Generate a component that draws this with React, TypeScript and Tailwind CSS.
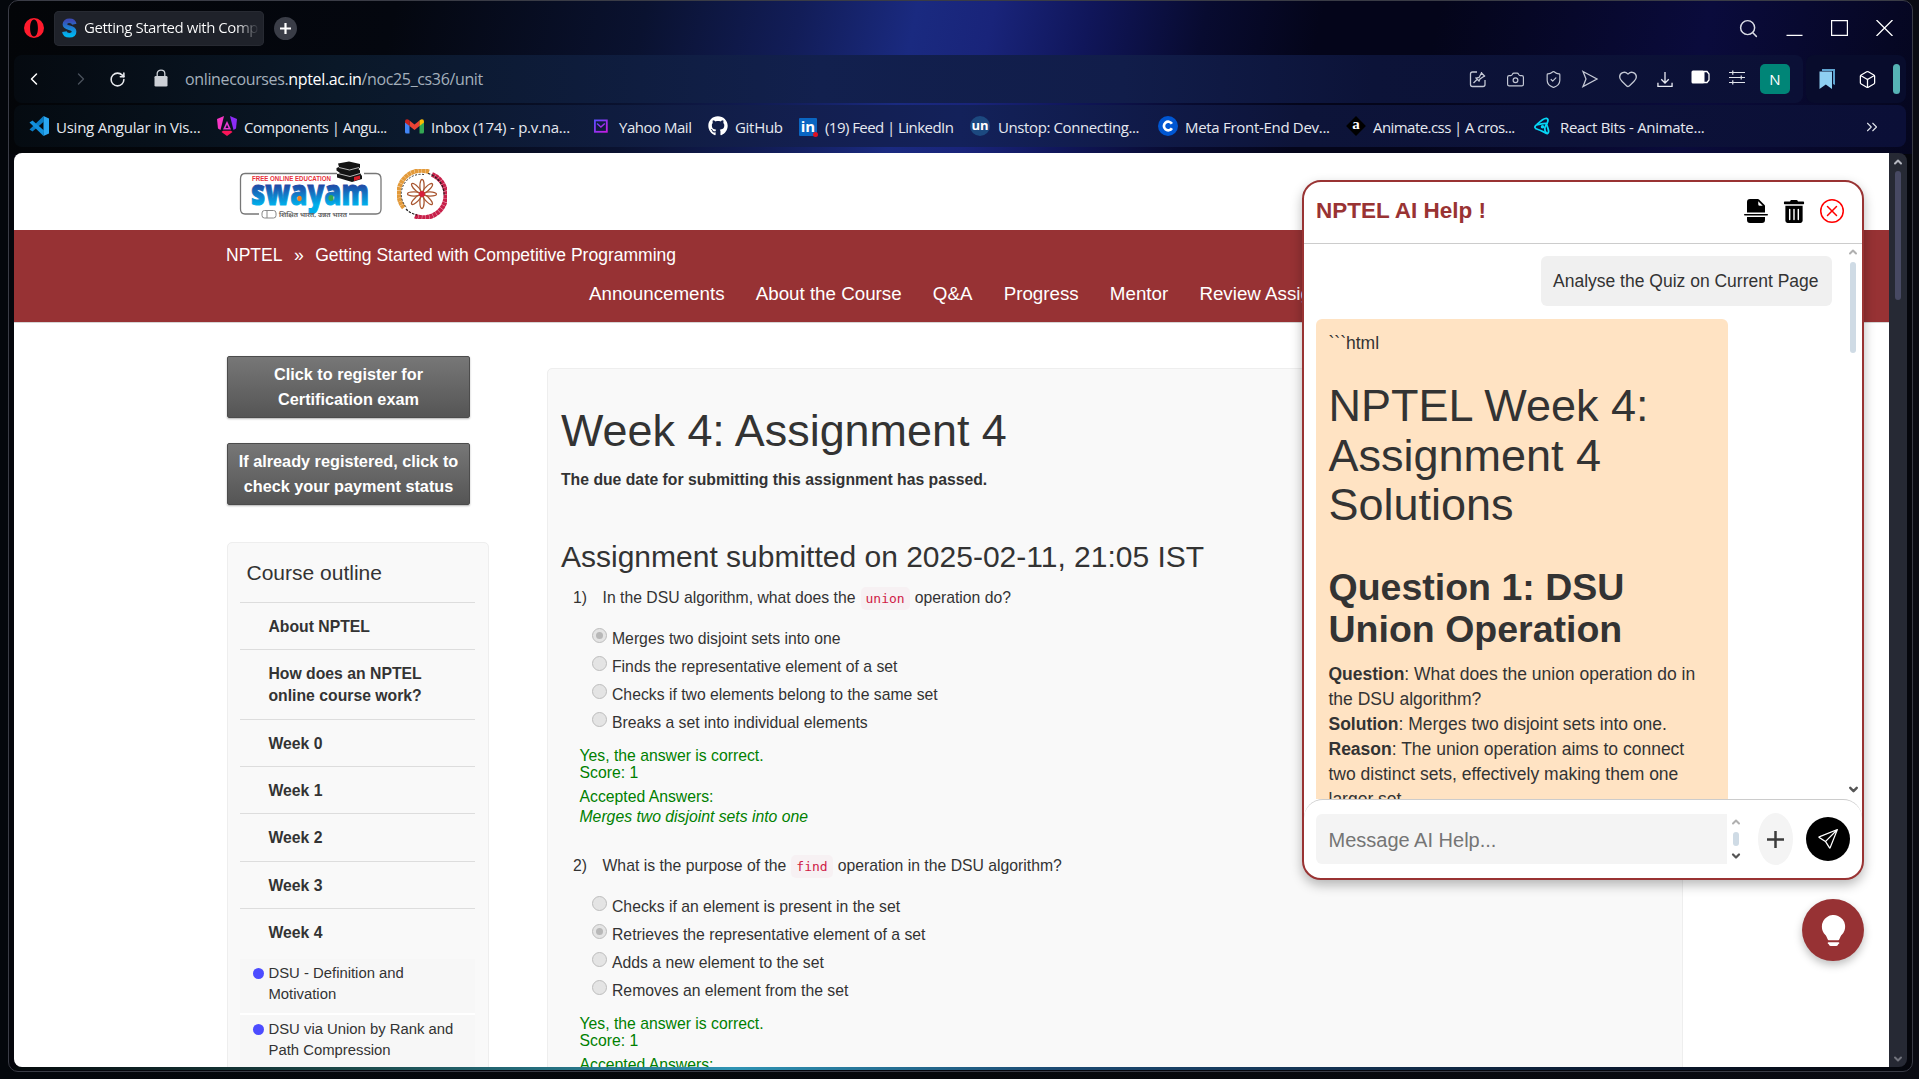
import React from "react";
import { BsFileEarmarkBreakFill, BsXCircle, BsSend, BsLightbulbFill } from "react-icons/bs";
import { FaGithub, FaTrashAlt } from "react-icons/fa";
import {
  Search, Camera, ShieldCheck, Heart, Box, ChevronsRight, ChevronLeft, ChevronRight, RotateCw,
  ChevronUp, ChevronDown,
} from "lucide-react";

const SwayamFavicon = () => (
  <svg className="h-5 w-[15px] shrink-0" viewBox="0 0 15 20" fill="none">
    <defs>
      <linearGradient id="fav" x1="0" y1="0" x2="0" y2="1">
        <stop offset="0" stopColor="#3b4bb5" />
        <stop offset="1" stopColor="#00b4ef" />
      </linearGradient>
    </defs>
    <path d="M12.300 6.200C11.700 3.600 9.800 2.800 7.500 2.800C4.600 2.800 2.900 4.200 2.900 6.200C2.900 11 12.100 8.500 12.100 13.500C12.100 16.200 10.200 17.200 7.400 17.200C4.500 17.200 2.800 16.200 2.400 13.600" stroke="url(#fav)" strokeWidth="4.600" />
  </svg>
);

const VsCode = () => (
  <svg className="size-5" viewBox="0 0 20 20">
    <path d="M14.500 0L20 2.500V17.500L14.500 20Z" fill="#2aa7f2" />
    <path d="M14.500 0L15 5.500L3.500 15.500L0.500 13.500Z" fill="#0a7cc4" />
    <path d="M0.500 6.500L3.500 4.500L15 14.500L14.500 20Z" fill="#1290dc" />
  </svg>
);
const Angular = () => (
  <svg className="size-5" viewBox="0 0 20 20">
    <path d="M0 3L7 0L3.500 14L1 12.500Z" fill="#f637c4" />
    <path d="M20 3L13 0L16.500 14L19 12.500Z" fill="#8b2cf5" />
    <path d="M10 5L14 13.500H6Z" fill="#e83ad0" />
    <path d="M10 8.500L11.500 12H8.500Z" fill="#0a1530" />
    <path d="M4.500 16L6 14.800H14L15.500 16L10 20Z" fill="#fb1458" />
  </svg>
);
const Gmail = () => (
  <svg className="h-5 w-[19px]" viewBox="0 0 19 20">
    <path d="M0 6L4.500 9V17.500H1.500Q0 17.500 0 16Z" fill="#4285f4" />
    <path d="M19 6L14.500 9V17.500H17.500Q19 17.500 19 16Z" fill="#34a853" />
    <path d="M4.500 4.500L9.500 8.500L14.500 4.500V10L9.500 14L4.500 10Z" fill="#ea4335" />
    <path d="M0 5.500Q0 3.200 2 3.200Q3 3.200 4.500 4.500V10L0 6.500Z" fill="#c5221f" />
    <path d="M19 5.500Q19 3.200 17 3.200Q16 3.200 14.500 4.500V10L19 6.500Z" fill="#fbbc04" />
  </svg>
);
const Yahoo = () => (
  <svg className="h-5 w-4" viewBox="0 0 16 20" fill="none">
    <defs>
      <linearGradient id="ya" x1="0" y1="0" x2="1" y2="1">
        <stop offset="0" stopColor="#5b4bff" />
        <stop offset="1" stopColor="#c81ce0" />
      </linearGradient>
    </defs>
    <rect x="0.900" y="4.400" width="11.900" height="11.400" stroke="url(#ya)" strokeWidth="1.800" />
    <path d="M3 7.500L6.900 11L10.800 7.500" stroke="url(#ya)" strokeWidth="1.500" />
  </svg>
);
const LinkedIn = () => (
  <div className="relative mt-px grid size-[18px] place-items-center rounded-[1px] bg-[#0a66c2] text-[15px] font-bold leading-none text-white">
    <span className="-mt-px">in</span>
    <i className="absolute -bottom-px -right-px size-[5px] rounded-full bg-[#e01020]" />
  </div>
);
const Unstop = () => (
  <div className="grid size-5 place-items-center rounded-full bg-[#1c4980] text-[13px] font-bold leading-none text-white">
    <span className="-mt-0.5">un</span>
  </div>
);
const Coursera = () => (
  <svg className="size-5" viewBox="0 0 20 20" fill="none">
    <circle cx="10" cy="10" r="10" fill="#0056d2" />
    <path d="M13.900 7.800A4.300 4.300 0 1 0 13.900 12.200" stroke="#fff" strokeWidth="2.700" />
  </svg>
);
const Animate = () => (
  <div className="relative grid size-5 place-items-center">
    <i className="absolute size-[14px] rotate-45 bg-black" />
    <span className="relative -mt-1 font-['Liberation_Serif',serif] text-[15px] font-bold leading-none text-white">a</span>
  </div>
);
const ReactBits = () => (
  <svg className="h-5 w-4" viewBox="0 0 16 20" fill="none" stroke="#06d6f5" strokeWidth="1.800">
    <path d="M3 8.500C6 5.500 10 2 12.500 2.300C15 3 14 6 12 9C9 13.500 12 17 13.500 17.500" />
    <path d="M3 8.500C0 10.500 0 12.500 4 13.500C8 14.500 12 17.500 13.500 17.500C16 16.500 13.500 11 12.500 8.500" />
    <path d="M3 8.500C6 9 11 6 13.500 8" />
    <circle cx="8.500" cy="10.800" r="0.900" />
  </svg>
);

const bookmarks = [
  { icon: <VsCode />, label: "Using Angular in Vis...", w: "w-[188px]", s: "w-[27px]", t: "tracking-[-0.24px]" },
  { icon: <Angular />, label: "Components | Angu...", w: "w-[188px]", s: "w-[27px]", t: "tracking-[-0.55px]" },
  { icon: <Gmail />, label: "Inbox (174) - p.v.na...", w: "w-[189px]", s: "w-[26px]", t: "tracking-[-0.24px]" },
  { icon: <Yahoo />, label: "Yahoo Mail", w: "w-[114px]", s: "w-[25px]", t: "tracking-[-0.48px]" },
  { icon: <FaGithub className="size-5 text-white" />, label: "GitHub", w: "w-[91px]", s: "w-[27px]", t: "tracking-[-0.3px]" },
  { icon: <LinkedIn />, label: "(19) Feed | LinkedIn", w: "w-[171px]", s: "w-[26px]", t: "tracking-[-0.55px]" },
  { icon: <Unstop />, label: "Unstop: Connecting...", w: "w-[188px]", s: "w-[28px]", t: "tracking-[-0.4px]" },
  { icon: <Coursera />, label: "Meta Front-End Dev...", w: "w-[188px]", s: "w-[27px]", t: "tracking-[-0.3px]" },
  { icon: <Animate />, label: "Animate.css | A cros...", w: "w-[188px]", s: "w-[27px]", t: "tracking-[-0.56px]" },
  { icon: <ReactBits />, label: "React Bits - Animate...", w: "w-[188px]", s: "w-[26px]", t: "tracking-[-0.3px]" },
];

const TitleBar = () => (
  <div className="flex h-[54px] shrink-0 items-center pl-[14px] pr-[19px]">
    <svg className="h-5 w-5" viewBox="0 0 20 20">
      <path fillRule="evenodd" d="M10 0A10 10 0 1 0 10 20A10 10 0 1 0 10 0ZM10 1.600C12.600 1.600 13.900 5.500 13.900 10S12.600 18.400 10 18.400S6.100 14.500 6.100 10S7.400 1.600 10 1.600Z" fill="#ff1b2d" />
    </svg>
    <div className="ml-[10px] flex h-[35px] w-[210px] items-center gap-[7px] overflow-hidden rounded-[5px] bg-[#1f222a] pl-2 pr-[5px] ring-1 ring-inset ring-[#272a32]">
      <SwayamFavicon />
      <span className="-mt-px overflow-hidden whitespace-nowrap bg-linear-to-r from-white from-88% to-[#2a2d35] bg-clip-text text-[15px] tracking-[-0.45px] text-transparent">
        Getting Started with Comp
      </span>
    </div>
    <div className="ml-[10px] grid size-[23px] place-items-center rounded-full bg-[#3a3d47]">
      <svg className="size-[11px]" viewBox="0 0 11 11" stroke="#fff" strokeWidth="2.200"><path d="M5.500 0V11M0 5.500H11" /></svg>
    </div>
    <div className="ml-auto flex items-center text-[#d9dbe4]">
      <Search className="mr-[27px] size-[21px]" strokeWidth={1.700} />
      <svg className="mr-[28px] h-4 w-[17px]" viewBox="0 0 17 16" stroke="#fff" strokeWidth="1.200"><path d="M0.500 15.400H16.500" /></svg>
      <svg className="mr-[28px] h-4 w-[17px]" viewBox="0 0 17 16" fill="none" stroke="#fff" strokeWidth="1.200"><path d="M0.600 0.600H16.400V15.400H0.600Z" /></svg>
      <svg className="h-4 w-[17px]" viewBox="0 0 17 16" fill="none" stroke="#fff" strokeWidth="1.300"><path d="M0.500 0L16.500 16M16.500 0L0.500 16" /></svg>
    </div>
  </div>
);

const AddressBar = () => (
  <div className="flex h-[48px] gap-[3px] pl-1 pr-[6px]">
    <div className="flex flex-1 items-center rounded-[8px] bg-[linear-gradient(90deg,#050a10,#0a1828_18%,#12204e_45%,#111d4a_62%,#0c1338_76%,#0b1036)] pl-[10px] pr-[13px]">
      <ChevronLeft className="size-5 text-white" strokeWidth={1.800} />
      <ChevronRight className="ml-[27px] size-5 text-[#4a525c]" strokeWidth={1.600} />
      <RotateCw className="ml-[18px] size-[17px] text-[#e8eaee]" strokeWidth={2.200} />
      <svg className="-mt-[3px] ml-[28px] h-[18px] w-[14px]" viewBox="0 0 14 18">
        <path d="M3.200 8V4.500C3.200 0 10.800 0 10.800 4.500V8" fill="none" stroke="#ccd0d6" strokeWidth="1.300" />
        <rect x="0.500" y="7" width="13" height="10.500" rx="1.300" fill="#ccd0d6" />
      </svg>
      <span className="ml-[17px] text-[16px] tracking-[-0.36px] text-[#a3afbb]">
        onlinecourses.<span className="text-white">nptel.ac.in</span>/noc25_cs36/unit
      </span>
      <div className="ml-auto flex items-center gap-[18.700px] text-[#c3c7d4]">
        <svg className="size-[18px]" viewBox="0 0 18 18" fill="none" stroke="currentColor" strokeWidth="1.300">
          <path d="M8 2H3.500Q1.500 2 1.500 4V14.500Q1.500 16.500 3.500 16.500H14Q16 16.500 16 14.500V10" />
          <path d="M4.500 13L8 9.500M6.500 7.500L10.500 11.500M7.500 8.200L10 7.500L12.500 3L15.500 6L11 9L10 11M12 2.500L16 6.500" />
        </svg>
        <Camera className="size-[19px]" strokeWidth={1.500} />
        <ShieldCheck className="size-[19px]" strokeWidth={1.500} />
        <svg className="h-[18px] w-[18px]" viewBox="0 0 18 18" fill="none" stroke="currentColor" strokeWidth="1.300"><path d="M2 1.500L16 9L2 16.500L5 9Z" /></svg>
        <Heart className="size-[20px]" strokeWidth={1.600} />
        <svg className="h-[17px] w-[16px]" viewBox="0 0 17 18" fill="none" stroke="#e8eaf2" strokeWidth="1.400"><path d="M8.500 1V12.500M4.500 8.700L8.500 12.700L12.500 8.700M1 12.500V16.300H16V12.500" /></svg>
        <svg className="-mt-1 h-[14px] w-[19px]" viewBox="0 0 19 14" fill="#fff"><rect x="0.500" y="0.500" width="13" height="13" rx="1.500" /><path d="M13 1.500H16L18 4V10L16 12.500H13" fill="none" stroke="#fff" strokeWidth="1.300" /></svg>
        <svg className="-mt-1 h-[15px] w-[16px]" viewBox="0 0 17 15" stroke="#dfe2ea" strokeWidth="1.300"><path d="M0 2.200H17M0 7.500H17M0 12.800H17M4 0V4.500M13 5.500V9.500M4 10.500V15" /></svg>
      </div>
      <div className="ml-[15px] grid h-[30px] w-[30px] place-items-center rounded-[5px] bg-[#008577] text-[15px] text-white">N</div>
    </div>
    <div className="flex w-[100px] items-center rounded-[8px] bg-[#080c2c] pl-[13px] pr-[6px]">
      <svg className="h-5 w-4" viewBox="0 0 16 20"><path d="M3 0H16V16L14 15V2H3Z" fill="#5ea3cf" /><path d="M0.500 2.500H13V20L6.800 15.500L0.500 20Z" fill="#8fd0f2" /></svg>
      <Box className="ml-[23px] size-[19px] text-white" strokeWidth={1.600} />
      <div className="ml-auto h-[30px] w-[7px] rounded-full bg-[#56b3b5]" />
    </div>
  </div>
);

const BookmarkBar = () => (
  <div className="ml-1 mr-[6px] mt-[2px] flex h-[42px] items-center rounded-[8px] bg-[linear-gradient(90deg,#050b11,#0a1828_18%,#131f50_42%,#13215a_50%,#0d1439_68%,#0b0f37)] pl-[15px] pr-[25px]">
    {bookmarks.map((b) => (
      <div key={b.label} className={"flex h-6 shrink-0 items-center " + b.w}>
        <div className={"flex shrink-0 items-center " + b.s}>{b.icon}</div>
        <span className={"mt-[2px] whitespace-nowrap text-[15px] text-[#e6e9f0] " + b.t}>{b.label}</span>
      </div>
    ))}
    <ChevronsRight className="ml-auto mt-[2px] size-[18px] text-[#dfe2ea]" strokeWidth={1.500} />
  </div>
);

const SwayamLogo = () => (
  <svg className="h-[60px] w-[145px]" viewBox="0 0 145 60">
    <defs>
      <linearGradient id="sw" x1="0" y1="0" x2="0" y2="1">
        <stop offset="0.350" stopColor="#2342a0" />
        <stop offset="0.780" stopColor="#00aeea" />
      </linearGradient>
    </defs>
    <path d="M20 54H6Q1.500 54 1.500 49V19Q1.500 13.500 6 13.500H98M125 13.500H137Q142 13.500 142 19V49Q142 54 137 54H110" fill="none" stroke="#777" strokeWidth="1.300" />
    <rect x="23" y="50.500" width="14" height="7.500" rx="2.500" fill="none" stroke="#888" strokeWidth="1" />
    <path d="M28 50.500V58" stroke="#888" />
    <text x="13" y="20.500" textLength="79" lengthAdjust="spacingAndGlyphs" fontSize="6.500" fontWeight="bold" fill="#e8303a" fontFamily="Liberation Sans, sans-serif">FREE ONLINE EDUCATION</text>
    <text x="12" y="44.500" textLength="118" lengthAdjust="spacingAndGlyphs" fontSize="36" fontWeight="800" fill="url(#sw)" stroke="url(#sw)" strokeWidth="1" fontFamily="Open Sans, sans-serif">swayam</text>
    <ellipse cx="60.500" cy="38.500" rx="2.200" ry="2.800" fill="#f58220" />
    <ellipse cx="92" cy="38" rx="2.600" ry="3" fill="#32a852" />
    <text x="40" y="57" textLength="68" lengthAdjust="spacingAndGlyphs" fontSize="5.500" fontWeight="bold" fill="#666" fontFamily="Noto Sans, Liberation Sans, sans-serif">शिक्षित भारत, उन्नत भारत</text>
    <path d="M99 3.500L110 1.500L121 4V7.500L119.500 9L121 10.500V13L123 16V19L113 22L98 17.500V14L101 13L97.500 10.500V8L100 7Z" fill="#141414" />
    <path d="M100 7.500L110.500 10L120 7.500M99 13.500L111 16.500L121 13.500" fill="none" stroke="#fff" strokeWidth="0.700" />
    <path d="M115 17L121 15.500V19L115 21Z" fill="#d8202a" />
  </svg>
);

const petals = [0, 45, 90, 135, 180, 225, 270, 315];
const Emblem = () => (
  <svg className="ml-[13px] mt-[16px] size-[50px]" viewBox="0 0 50 50" fill="none">
    <path d="M32 2.800A22.800 22.800 0 0 0 7 39" stroke="#e39a3a" strokeWidth="4.600" strokeDasharray="3.400 0.300" />
    <path d="M35 5.500A22.300 22.300 0 0 1 18 47" stroke="#c8204a" strokeWidth="4.800" strokeDasharray="3.400 0.300" />
    <path d="M27 5.500A19.800 19.800 0 0 0 10 39" stroke="#333" strokeWidth="1" strokeDasharray="2 1.500" />
    <path d="M31 4.500A22 22 0 0 1 47 27M9 40A22 22 0 0 0 20 46" stroke="#222" strokeWidth="1.200" strokeDasharray="2.500 1.200" />
    {petals.map((a) => (
      <ellipse key={a} cx="25" cy="17" rx="2.100" ry="6.500" stroke="#a8552f" strokeWidth="1.300" transform={`rotate(${a} 25 25)`} />
    ))}
    <circle cx="25" cy="25" r="2.900" fill="#d81e3c" />
  </svg>
);

const SiteHeader = () => (
  <header>
    <div className="flex h-[77px] pl-[225px]">
      <div className="mt-[7px]"><SwayamLogo /></div>
      <Emblem />
    </div>
    <div className="h-[93px] border-b border-[#d5d5d5] bg-[#973234] pt-[13px] text-white">
      <div className="flex gap-[11.500px] pl-[212px] text-[17.500px] leading-[25px]">
        <span>NPTEL</span><span>»</span><span>Getting Started with Competitive Programming</span>
      </div>
      <nav className="mt-[12px] flex gap-[31.200px] whitespace-nowrap pl-[575px] text-[18.750px] leading-[28px]">
        {["Announcements", "About the Course", "Q&A", "Progress", "Mentor", "Review Assignment"].map((n) => <span key={n}>{n}</span>)}
      </nav>
    </div>
  </header>
);

const SideButton = ({ children }: { children: React.ReactNode }) => (
  <button className="h-[62px] w-[243px] rounded-[2px] border border-[#4c4c4c] bg-linear-to-b from-[#777] to-[#555] pb-[5px] pt-[4px] text-center text-[16.250px] font-bold leading-[25px] text-white shadow-[0_1px_2px_rgba(0,0,0,0.3)]">
    {children}
  </button>
);

const OutlineItem = ({ children, h = "h-[47.200px]" }: { children: React.ReactNode; h?: string }) => (
  <div className={"shrink-0 border-t border-[#ddd] pl-[28.500px] pt-[13px] text-[15.750px] font-bold leading-[22px] " + h}>{children}</div>
);

const Lesson = ({ children }: { children: React.ReactNode }) => (
  <div className="flex border-b-2 border-white bg-[#f7f7f7] pb-[8px] pl-[13px] pt-[4px] text-[14.850px] leading-[21px]">
    <i className="mr-[4.500px] mt-[5px] size-[11px] shrink-0 rounded-full bg-[#4c4cff]" />
    <span>{children}</span>
  </div>
);

const Sidebar = () => (
  <aside className="flex w-[262px] shrink-0 flex-col pt-[33px]">
    <SideButton>Click to register for<br />Certification exam</SideButton>
    <div className="h-[25px]" />
    <SideButton>If already registered, click to<br />check your payment status</SideButton>
    <div className="mt-[37px] h-[620px] rounded-[5px] border border-[#eee] bg-[#f9f9f9] pl-[12px] pr-[13px] pt-[17px]">
      <h4 className="h-[42px] pl-[6.500px] text-[21px] leading-[26px]">Course outline</h4>
      <OutlineItem>About NPTEL</OutlineItem>
      <OutlineItem h="h-[69.800px]">How does an NPTEL<br />online course work?</OutlineItem>
      <OutlineItem>Week 0</OutlineItem>
      <OutlineItem>Week 1</OutlineItem>
      <OutlineItem>Week 2</OutlineItem>
      <OutlineItem>Week 3</OutlineItem>
      <OutlineItem h="h-[51px]">Week 4</OutlineItem>
      <Lesson>DSU - Definition and<br />Motivation</Lesson>
      <Lesson>DSU via Union by Rank and<br />Path Compression</Lesson>
    </div>
  </aside>
);

const Code = ({ children }: { children: string }) => (
  <code className="mx-[5px] rounded-[5px] bg-[#f7f1f3] px-[5px] py-[4px] font-['DejaVu_Sans_Mono',monospace] text-[13px] text-[#d01b46]">{children}</code>
);

type Question = { n: number; before: string; code: string; after: string; options: string[]; picked: number };
const questions: Question[] = [
  { n: 1, before: "In the DSU algorithm, what does the", code: "union", after: "operation do?", picked: 0,
    options: ["Merges two disjoint sets into one", "Finds the representative element of a set", "Checks if two elements belong to the same set", "Breaks a set into individual elements"] },
  { n: 2, before: "What is the purpose of the", code: "find", after: "operation in the DSU algorithm?", picked: 1,
    options: ["Checks if an element is present in the set", "Retrieves the representative element of a set", "Adds a new element to the set", "Removes an element from the set"] },
];

const QuestionBlock = ({ q }: { q: Question }) => (
  <div className="mb-[26.500px] text-[15.750px]">
    <div className="flex pl-[12px] leading-[25px]">
      <span className="w-[29.500px]">{q.n})</span>
      <span>{q.before}<Code>{q.code}</Code>{q.after}</span>
    </div>
    <div className="mt-[13.500px] pl-[31px]">
      {q.options.map((o, i) => (
        <div key={o} className="flex h-[28px] leading-[28px]">
          <i className="mr-[5px] mt-[3px] grid size-[15px] place-items-center rounded-full border-[1.500px] border-[#bdbdbd] bg-[#e4e4e4]">
            {i === q.picked && <b className="size-[7px] rounded-full bg-[#b8b8b8]" />}
          </i>
          {o}
        </div>
      ))}
    </div>
    <div className="mt-[10.500px] pl-[18.500px] text-[#008000]">
      <div className="leading-[17px]">Yes, the answer is correct.<br />Score: 1</div>
      <div className="mt-[5.500px] leading-[20px]">Accepted Answers:<br /><em>{q.options[q.picked]}</em></div>
    </div>
  </div>
);

const Assignment = () => (
  <section className="ml-[58px] mt-[45px] h-[800px] w-[1136px] shrink-0 rounded-[5px] border border-[#eee] bg-[#f9f9f9] pl-[13px] pt-[36.500px]">
    <h1 className="text-[44.900px] leading-[50px]">Week 4: Assignment 4</h1>
    <p className="mt-[11.500px] text-[15.750px] font-bold leading-[25px]">The due date for submitting this assignment has passed.</p>
    <h3 className="mb-[9px] mt-[46px] text-[30px] leading-[38px]">Assignment submitted on 2025-02-11, 21:05 IST</h3>
    {questions.map((q) => <QuestionBlock key={q.n} q={q} />)}
  </section>
);

const HelpPanel = () => (
  <div className="absolute left-[1288px] top-[27px] flex h-[700px] w-[562px] flex-col overflow-hidden rounded-[19px] border-2 border-[#993333] bg-white text-[17.500px] leading-[25px] text-[#333] shadow-[0_5px_12px_rgba(0,0,0,0.28)]">
    <div className="flex h-[62px] shrink-0 items-center border-b border-[#ccc] pb-[3px] pl-[12px] pr-[18px]">
      <h2 className="text-[22.500px] font-bold leading-[30px] text-[#993333]">NPTEL AI Help !</h2>
      <BsFileEarmarkBreakFill className="ml-auto size-6 text-black" />
      <FaTrashAlt className="ml-[15px] h-[23px] w-[22px] text-black" />
      <BsXCircle className="ml-[15px] size-6 text-[#f00]" />
    </div>
    <div className="flex min-h-0 flex-1">
      <div className="flex min-w-0 flex-1 flex-col overflow-hidden pl-[12px] pt-[12px]">
        <div className="ml-auto mr-[12px] h-[50px] w-[291px] shrink-0 whitespace-nowrap rounded-[6px] bg-[#f0f0f0] pl-[12px] pt-[13px]">Analyse the Quiz on Current Page</div>
        <div className="mt-[13px] h-[600px] w-[412px] shrink-0 rounded-[6px] bg-[#ffe3c3] pl-[12.500px] pr-[20px] pt-[12px]">
          <p>```html</p>
          <h1 className="mt-[25px] text-[45px] leading-[49.500px]">NPTEL Week 4: Assignment 4 Solutions</h1>
          <h2 className="mt-[36px] text-[37.500px] font-bold leading-[42px]">Question 1: DSU Union Operation</h2>
          <div className="mt-[12px]">
            <p><b>Question</b>: What does the union operation do in the DSU algorithm?</p>
            <p><b>Solution</b>: Merges two disjoint sets into one.</p>
            <p><b>Reason</b>: The union operation aims to connect two distinct sets, effectively making them one larger set.</p>
          </div>
        </div>
      </div>
      <div className="flex w-[18px] flex-col items-center pb-[3px] pt-[2px]">
        <ChevronUp className="size-[12px] text-[#b0b0b0]" strokeWidth={4} />
        <div className="mt-[4px] h-[91px] w-[6px] rounded-full bg-[#cfdbe5]" />
        <ChevronDown className="mt-auto size-[13px] text-[#555]" strokeWidth={4.500} />
      </div>
    </div>
    <div className="flex h-[79px] shrink-0 items-center rounded-t-[19px] border-t border-[#ccc] pl-[12px] pr-[12px]">
      <div className="flex h-[50px] w-[411px] items-center rounded-l-[6px] bg-[#f4f4f4] pl-[12.500px] pt-[2px] text-[20px] text-[#757575]">Message AI Help...</div>
      <div className="ml-[3px] flex h-[46px] w-[12px] flex-col items-center justify-between">
        <ChevronUp className="size-[12px] text-[#b0b0b0]" strokeWidth={4} />
        <div className="h-[14px] w-[6px] rounded-full bg-[#cfdbe5]" />
        <ChevronDown className="size-[12px] text-[#555]" strokeWidth={4.500} />
      </div>
      <div className="ml-[16px] grid h-[52px] w-[35px] place-items-center rounded-[50%] bg-[#f4f4f4]">
        <svg className="size-[17px]" viewBox="0 0 17 17" stroke="#3c3c3c" strokeWidth="2.500"><path d="M8.500 0V17M0 8.500H17" /></svg>
      </div>
      <div className="ml-auto grid size-[44px] place-items-center rounded-full bg-black text-white"><BsSend className="size-5" /></div>
    </div>
  </div>
);

export default function App() {
  return (
    <div className="h-[1079px] w-[1919px] overflow-hidden bg-[linear-gradient(90deg,#04070c,#06080b_50%,#0a0b12)] pl-[8px] font-['Liberation_Sans',Arial,sans-serif]">
      <div className="flex h-[1072px] w-[1905px] flex-col overflow-hidden rounded-[10px] border border-[#3a3c46] bg-[#05060c] bg-[linear-gradient(102deg,#030508,#04070f_20%,#0a1230_33%,#121d58_41%,#1a2a80_47%,#19247a_51%,#10165a_56%,#080b30_62%,#04051a_68%,#04051a_74%,#0a0b3c_88%,#05061e)] bg-[size:100%_153px] bg-no-repeat pl-px">
        <div className="shrink-0 font-['Open_Sans',sans-serif]">
          <TitleBar />
          <AddressBar />
          <BookmarkBar />
        </div>
        <div className="ml-1 mt-[6px] flex h-[914px] w-[1893px] shrink-0 overflow-hidden rounded-[8px] bg-[#262934] pr-px">
          <div className="relative h-[914px] w-[1875px] shrink-0 overflow-hidden bg-white text-[#333]">
            <SiteHeader />
            <div className="flex pl-[213px]">
              <Sidebar />
              <Assignment />
            </div>
            <HelpPanel />
            <div className="absolute left-[1788px] top-[746px] grid size-[62px] place-items-center rounded-full bg-[#973234] text-white shadow-[0_4px_8px_rgba(0,0,0,0.25)]">
              <BsLightbulbFill className="size-[31px]" />
            </div>
          </div>
          <div className="flex flex-1 flex-col items-center pt-[3px]">
            <ChevronUp className="size-[12px] text-[#b5b7c0]" strokeWidth={4} />
            <div className="mt-[3px] h-[129px] w-[6px] rounded-full bg-[#474963]" />
            <ChevronDown className="mb-[2px] mt-auto size-[12px] text-[#71737c]" strokeWidth={4} />
          </div>
        </div>
        <div className="ml-1 h-[3px] w-[1893px] shrink-0 bg-[linear-gradient(90deg,#050a0c,#1c4a4a_18%,#2e93b3_38%,#1c4a72_55%,#0b1a30_85%,#04060c)]" />
      </div>
    </div>
  );
}
